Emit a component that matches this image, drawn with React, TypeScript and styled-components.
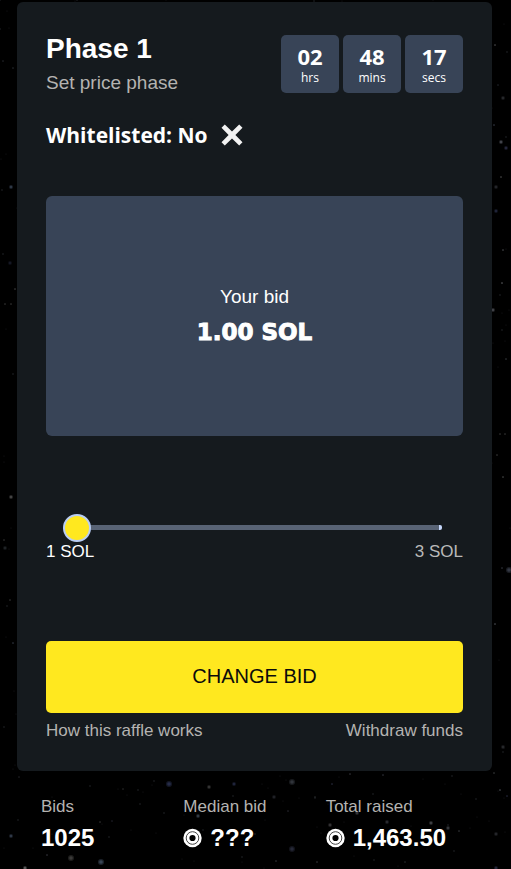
import React, { useState } from "react";
import styled, { createGlobalStyle } from "styled-components";

const sans = '"Liberation Sans", Arial, sans-serif';
const humanist = '"Open Sans", "Segoe UI", sans-serif';
const wide = '"DejaVu Sans", "Arial Black", sans-serif';

const GlobalStyle = createGlobalStyle`
  *, *::before, *::after { box-sizing: border-box; }
  body { margin: 0; background: #000; color: #fff; font-family: ${sans}; }
  h1, h2, p, dl, dt, dd { margin: 0; }
`;

const Page = styled.div`
  position: relative;
  min-height: 100vh;
  overflow: hidden;
  padding: 2px 19px 0 17px;
`;

const Sky = styled.svg`
  position: absolute;
  inset: 0;
  width: 100%;
  height: 100%;
  pointer-events: none;
`;

const Card = styled.main`
  position: relative;
  padding: 29px;
  border-radius: 6px;
  background: #151a1e;
`;

const Header = styled.header`
  display: flex;
  justify-content: space-between;
  align-items: flex-start;
  height: 88px;
`;

const Title = styled.h1`
  font-size: 28px;
  font-weight: 700;
  line-height: 36px;
`;

const Subtitle = styled.p`
  font-size: 19px;
  line-height: 32px;
  color: #b4b3b1;
`;

const Countdown = styled.div`
  display: flex;
  gap: 4px;
  padding-top: 4px;
`;

const TimeBox = styled.div`
  display: flex;
  flex-direction: column;
  align-items: center;
  width: 58px;
  height: 58px;
  padding-top: 7px;
  border-radius: 5px;
  background: #384457;
  font-family: ${humanist};
`;

const TimeValue = styled.span`
  font-size: 22px;
  font-weight: 700;
  line-height: 28px;
`;

const TimeUnit = styled.span`
  font-size: 12px;
  line-height: 16px;
`;

const Whitelist = styled.h2`
  display: flex;
  align-items: center;
  gap: 12px;
  font-family: ${humanist};
  font-size: 21px;
  font-weight: 700;
  line-height: 32px;
`;

const BidPanel = styled.section`
  display: flex;
  flex-direction: column;
  align-items: center;
  justify-content: center;
  height: 240px;
  margin-top: 45px;
  border-radius: 6px;
  background: #384457;
`;

const BidLabel = styled.span`
  font-size: 19px;
  line-height: 32px;
`;

const BidAmount = styled.strong`
  font-family: ${wide};
  font-size: 23px;
  font-weight: 700;
  line-height: 38px;
  -webkit-text-stroke: 1px #fff;
`;

const SliderArea = styled.div`
  padding: 77px 21px 0 17px;
`;

const Slider = styled.input`
  display: block;
  width: 100%;
  height: 28px;
  margin: 0;
  appearance: none;
  background: transparent;
  cursor: pointer;

  &::-webkit-slider-runnable-track {
    height: 5px;
    border-radius: 2px;
    background: linear-gradient(to left, #c5d7fb 3px, #586375 3px);
  }
  &::-webkit-slider-thumb {
    appearance: none;
    width: 28px;
    height: 28px;
    margin-top: -11px;
    border: 2px solid #b9cdf3;
    border-radius: 50%;
    background: #ffe81f;
  }
`;

const Between = styled.div`
  display: flex;
  justify-content: space-between;
`;

const Mark = styled.label<{ $active?: boolean }>`
  font-size: 17px;
  line-height: 22px;
  color: ${(p) => (p.$active ? "#fff" : "#b9b9b9")};
`;

const BidButton = styled.button`
  display: block;
  width: 100%;
  height: 72px;
  margin-top: 78px;
  padding: 0 0 2px;
  border: 0;
  border-radius: 5px;
  background: #ffe81f;
  color: #0b0b0b;
  font-family: ${sans};
  font-size: 20px;
  cursor: pointer;
`;

const Links = styled(Between)`
  padding-top: 7px;
`;

const FootLink = styled.a`
  font-size: 17px;
  line-height: 22px;
  color: #b4b3b1;
  text-decoration: none;
`;

const Stats = styled.dl`
  position: relative;
  display: grid;
  grid-template-columns: repeat(3, 1fr);
  padding: 24px 24px 14px;
`;

const StatLabel = styled.dt`
  font-size: 17px;
  line-height: 24px;
  color: #b4b3b1;
`;

const StatValue = styled.dd`
  display: flex;
  align-items: center;
  gap: 8px;
  padding-top: 3px;
  font-size: 24px;
  font-weight: 700;
  line-height: 32px;
  white-space: nowrap;
`;

// x, y, radius, colour
const stars: [number, number, number, string][] = [
  [13, 68, 1, "#25282e"], [11, 187, 2, "#303a48"], [10, 263, 2, "#151824"], [15, 289, 1, "#3c3c3e"],
  [5, 304, 1, "#343434"], [11, 304, 1, "#343434"], [11, 497, 2, "#454545"], [5, 548, 2, "#202326"],
  [10, 600, 1, "#333333"], [13, 643, 1, "#303641"], [3, 61, 1, "#24252a"], [4, 540, 1, "#333333"],
  [495, 45, 1, "#494a4c"], [503, 98, 2, "#26282c"], [494, 125, 1, "#343743"], [501, 142, 2, "#42444a"],
  [506, 148, 2, "#26283d"], [501, 177, 1, "#4a4a4a"], [496, 187, 2, "#24252a"], [496, 211, 2, "#20243a"],
  [503, 250, 1, "#45474b"], [502, 283, 1, "#55565a"], [493, 310, 2, "#424348"], [506, 359, 1, "#33353a"],
  [498, 85, 1, "#202328"], [497, 455, 1, "#363636"], [503, 477, 1, "#454748"], [509, 570, 3, "#343844"],
  [502, 568, 1, "#32343b"], [495, 624, 1, "#4a4c50"], [503, 747, 2, "#26282c"], [500, 434, 1, "#343434"],
  [505, 434, 1, "#343434"], [169, 784, 3, "#252b48"], [234, 784, 2, "#20243c"], [209, 787, 2, "#343434"],
  [198, 816, 2, "#333b45"], [100, 822, 1, "#333333"], [112, 821, 1, "#20212a"], [11, 836, 2, "#303948"],
  [47, 855, 1, "#34343b"], [71, 858, 3, "#3a3938"], [101, 862, 3, "#384454"], [25, 868, 2, "#555555"],
  [19, 777, 1, "#222225"], [123, 789, 1, "#282828"], [292, 782, 3, "#30343a"], [332, 784, 1, "#272b3d"],
  [274, 797, 2, "#202126"], [315, 797, 1, "#2a2b2d"], [288, 811, 1, "#26262d"], [330, 825, 2, "#333234"],
  [357, 813, 2, "#34363a"], [387, 822, 2, "#292b30"], [431, 823, 2, "#3d3f44"], [448, 828, 2, "#34363a"],
  [459, 831, 1, "#34363a"], [292, 849, 3, "#252837"], [276, 861, 1, "#303236"], [317, 862, 1, "#323335"],
  [496, 834, 2, "#24252a"], [500, 790, 1, "#484b50"], [507, 796, 1, "#26283d"], [494, 773, 1, "#35373a"],
  [496, 868, 2, "#24253a"], [383, 775, 1, "#30323a"], [350, 774, 1, "#34343a"], [405, 862, 1, "#25272b"],
];

const dust = Array.from({ length: 650 }, (_, i) => [
  (i * 197 + ((i * i * 13) % 71)) % 511,
  (i * 331 + ((i * i * 7) % 113)) % 869,
]);

const Starfield = () => (
  <Sky viewBox="0 0 511 869" preserveAspectRatio="xMidYMin slice" aria-hidden="true">
    {dust.map(([x, y], i) => (
      <circle key={i} cx={x} cy={y} r={i % 3 ? 0.6 : 0.9} fill="#17191b" />
    ))}
    {stars.map(([x, y, r, fill], i) => (
      <g key={i} fill={fill}>
        <circle cx={x} cy={y} r={r} opacity={0.5} />
        <circle cx={x} cy={y} r={r * 0.6} />
      </g>
    ))}
  </Sky>
);

const CrossIcon = () => (
  <svg width="24" height="24" viewBox="0 0 24 24" aria-hidden="true">
    <path
      d="M1.5 4.8 4.8 1.5 12 8.6 19.2 1.5 22.5 4.8 15.4 12 22.5 19.2 19.2 22.5 12 15.4 4.8 22.5 1.5 19.2 8.6 12Z"
      fill="#f2f2f2"
    />
  </svg>
);

const SolIcon = () => (
  <svg width="19" height="20" viewBox="0 0 19 20" fill="none" aria-hidden="true">
    <circle cx="9.5" cy="10" r="9.2" fill="#fff" />
    <circle cx="9.5" cy="10" r="6.3" stroke="#444" strokeWidth="1" />
    <circle cx="9.5" cy="10" r="3.1" fill="#000" />
  </svg>
);

const times = [
  { value: "02", unit: "hrs" },
  { value: "48", unit: "mins" },
  { value: "17", unit: "secs" },
];

const stats = [
  { label: "Bids", value: "1025", sol: false },
  { label: "Median bid", value: "???", sol: true },
  { label: "Total raised", value: "1,463.50", sol: true },
];

export default function App() {
  const [bid, setBid] = useState(1);

  return (
    <>
      <GlobalStyle />
      <Page>
        <Starfield />
        <Card>
          <Header>
            <div>
              <Title>Phase 1</Title>
              <Subtitle>Set price phase</Subtitle>
            </div>
            <Countdown>
              {times.map((t) => (
                <TimeBox key={t.unit}>
                  <TimeValue>{t.value}</TimeValue>
                  <TimeUnit>{t.unit}</TimeUnit>
                </TimeBox>
              ))}
            </Countdown>
          </Header>
          <Whitelist>
            Whitelisted: No <CrossIcon />
          </Whitelist>
          <BidPanel>
            <BidLabel>Your bid</BidLabel>
            <BidAmount>{bid.toFixed(2)} SOL</BidAmount>
          </BidPanel>
          <SliderArea>
            <Slider
              id="bid"
              type="range"
              min={1}
              max={3}
              step={0.01}
              value={bid}
              onChange={(e) => setBid(Number(e.target.value))}
            />
          </SliderArea>
          <Between>
            <Mark htmlFor="bid" $active>1 SOL</Mark>
            <Mark htmlFor="bid" $active={bid === 3}>3 SOL</Mark>
          </Between>
          <BidButton type="button">CHANGE BID</BidButton>
          <Links>
            <FootLink href="#how">How this raffle works</FootLink>
            <FootLink href="#withdraw">Withdraw funds</FootLink>
          </Links>
        </Card>
        <Stats>
          {stats.map((s) => (
            <div key={s.label}>
              <StatLabel>{s.label}</StatLabel>
              <StatValue>
                {s.sol && <SolIcon />}
                {s.value}
              </StatValue>
            </div>
          ))}
        </Stats>
      </Page>
    </>
  );
}
